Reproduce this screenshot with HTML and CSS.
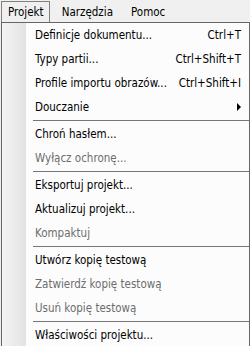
FILE: index.html
```html
<!DOCTYPE html>
<html lang="pl">
<head>
    <meta charset="UTF-8">
    <title>Projekt</title>
    <link rel="stylesheet" href="styles.css">
</head>
<body>
<div class="menubar">
    <span class="top open">Projekt</span>
    <span class="top">Narzędzia</span>
    <span class="top">Pomoc</span>
</div>
<div class="dropdown">
    <div class="item"><span class="label">Definicje dokumentu...</span><span class="key">Ctrl+T</span></div>
    <div class="item"><span class="label">Typy partii...</span><span class="key">Ctrl+Shift+T</span></div>
    <div class="item"><span class="label">Profile importu obrazów...</span><span class="key">Ctrl+Shift+I</span></div>
    <div class="item"><span class="label">Douczanie</span><span class="arrow"></span></div>
    <div class="sep"></div>
    <div class="item"><span class="label">Chroń hasłem...</span></div>
    <div class="item disabled"><span class="label">Wyłącz ochronę...</span></div>
    <div class="sep"></div>
    <div class="item"><span class="label">Eksportuj projekt...</span></div>
    <div class="item"><span class="label">Aktualizuj projekt...</span></div>
    <div class="item disabled"><span class="label">Kompaktuj</span></div>
    <div class="sep"></div>
    <div class="item"><span class="label">Utwórz kopię testową</span></div>
    <div class="item disabled"><span class="label">Zatwierdź kopię testową</span></div>
    <div class="item disabled"><span class="label">Usuń kopię testową</span></div>
    <div class="sep"></div>
    <div class="item"><span class="label">Właściwości projektu...</span></div>
</div>
</body>
</html>
```

FILE: styles.css
```css
html, body {
    margin: 0;
    height: 100%;
    overflow: hidden;
}

body {
    background-color: #f0f0f0;
    font-family: "DejaVu Sans Condensed", "DejaVu Sans", sans-serif;
    font-size: 11.5px;
    color: #000;
}

.menubar {
    display: flex;
    height: 22px;
    padding-left: 1px;
    box-sizing: border-box;
}

.top {
    margin-top: 1px;
    height: 21px;
    line-height: 20px;
    padding: 0 5px;
    border: 1px solid transparent;
    border-bottom: 0;
    box-sizing: border-box;
    margin-right: 6px;
}

.top.open {
    padding: 0 5px 0 6px;
    border-color: #808080;
}

.dropdown {
    margin-left: 1px;
    border: 1px solid #666;
    border-bottom: 0;
    background: linear-gradient(to right, #f4f4f4 0, #e2e2e2 24px, #fcfcfc 24px);
}

.item {
    display: flex;
    align-items: center;
    height: 24px;
    padding: 0 8px 0 33px;
    white-space: nowrap;
}

.item .key {
    margin-left: auto;
}

.item.disabled {
    color: #6d6d6d;
}

.arrow {
    margin-left: auto;
    width: 0;
    height: 0;
    border-left: 4px solid #000;
    border-top: 4px solid transparent;
    border-bottom: 4px solid transparent;
}

.sep {
    height: 1px;
    margin: 1px 0 1px 31px;
    background-color: #777;
}
```
